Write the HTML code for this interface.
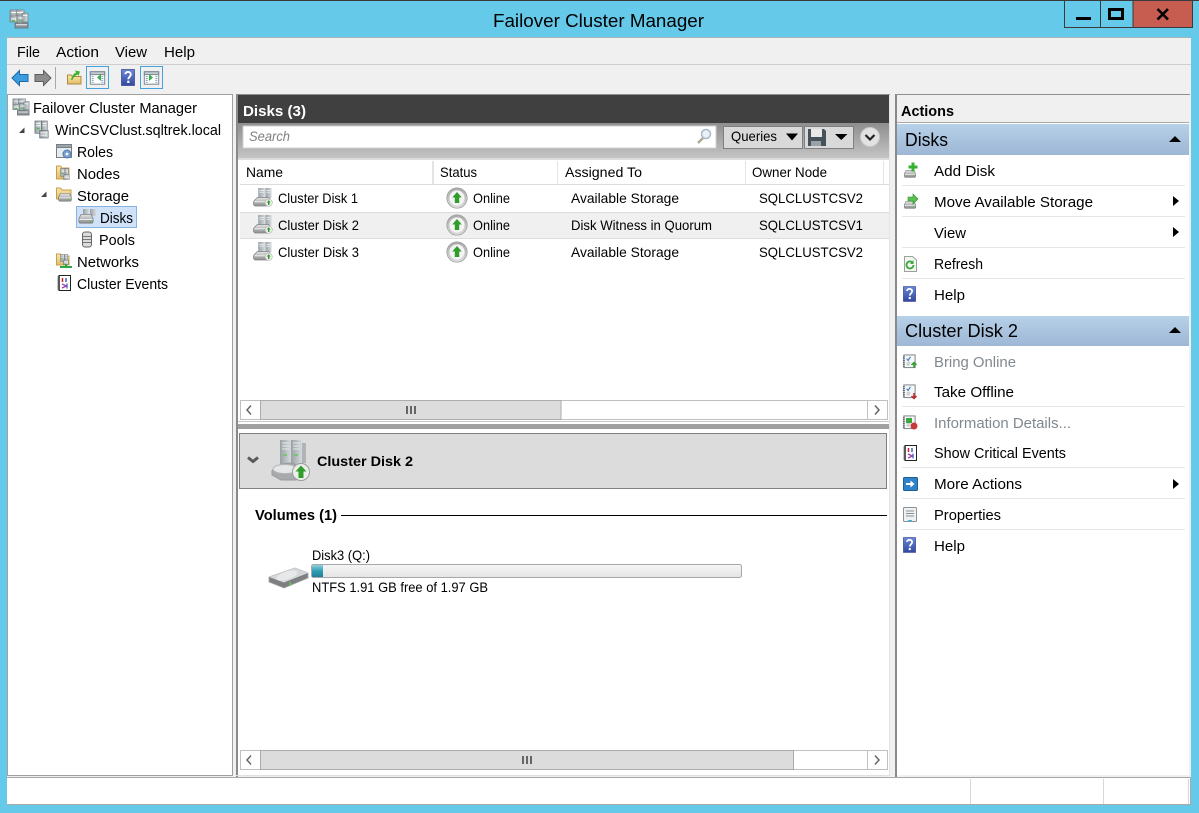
<!DOCTYPE html>
<html><head><meta charset="utf-8"><title>Failover Cluster Manager</title>
<style>
html,body{margin:0;padding:0;background:#65c9ea;overflow:hidden}
svg{display:block;position:absolute;left:0;top:0}
text{font-family:"Liberation Sans",sans-serif;fill:#000;font-size:15px;white-space:pre}
.r{font-size:14px}
.g{fill:#808890}
.b{font-weight:bold}
</style></head><body>
<svg width="1199" height="813" viewBox="0 0 1199 813" xmlns="http://www.w3.org/2000/svg">
<defs>
<linearGradient id="blue" x1="0" y1="0" x2="0" y2="1"><stop offset="0" stop-color="#b7d1e9"/><stop offset="1" stop-color="#9db7d5"/></linearGradient>
<linearGradient id="gb" x1="0" y1="0" x2="0" y2="1"><stop offset="0" stop-color="#8e8e8e"/><stop offset="1" stop-color="#c4c4c4"/></linearGradient>
<linearGradient id="prog" x1="0" y1="0" x2="0" y2="1"><stop offset="0" stop-color="#f6f6f6"/><stop offset="1" stop-color="#e4e4e4"/></linearGradient>
<linearGradient id="teal" x1="0" y1="0" x2="0" y2="1"><stop offset="0" stop-color="#8fd0de"/><stop offset=".5" stop-color="#2f9db5"/><stop offset="1" stop-color="#1f7f98"/></linearGradient>
<linearGradient id="ring" x1="0" y1="0" x2="0" y2="1"><stop offset="0" stop-color="#a8a8a8"/><stop offset="1" stop-color="#dcdcdc"/></linearGradient>
<linearGradient id="tower" x1="0" y1="0" x2="1" y2="0"><stop offset="0" stop-color="#97a1a6"/><stop offset="1" stop-color="#d6dadc"/></linearGradient>
<linearGradient id="hd" x1="0" y1="0" x2="0" y2="1"><stop offset="0" stop-color="#e6e6e6"/><stop offset="1" stop-color="#8a8a8a"/></linearGradient>
<linearGradient id="folder" x1="0" y1="0" x2="0" y2="1"><stop offset="0" stop-color="#fbe7a8"/><stop offset="1" stop-color="#e2bd6a"/></linearGradient>
<linearGradient id="help" x1="0" y1="0" x2="0" y2="1"><stop offset="0" stop-color="#6a88d8"/><stop offset="1" stop-color="#3348a0"/></linearGradient>

<symbol id="disk" viewBox="0 0 20 20">
<rect x="5" y="0" width="7" height="11" fill="url(#tower)"/><rect x="12.500" y="0" width="6.500" height="11" fill="url(#tower)"/>
<path d="M6 2.500h5M6 4.500h5M13.500 2.500h4.500M13.500 4.500h4.500" stroke="#eef0f0" stroke-width=".8"/>
<path d="M1 13 4 10h12l2 3v4.500l-1 1.500H1.500L0 17.500v-3z" fill="url(#hd)" stroke="#7b8185" stroke-width=".7"/>
<rect x="1" y="14" width="15" height="1" fill="#f0f0f0"/>
<circle cx="16" cy="15.500" r="3.800" fill="#eef0ee" stroke="#a8aeaa" stroke-width=".6"/>
<path d="M16 12.800 13.900 15.300h1.300v2.600h1.600v-2.600h1.300z" fill="#2f9d2a"/>
</symbol>
<symbol id="online" viewBox="0 0 22 22">
<circle cx="11" cy="11" r="10.200" fill="url(#ring)" stroke="#9a9a9a" stroke-width=".7"/>
<circle cx="11" cy="11" r="7.600" fill="#f4f4f4"/>
<path d="M11 5 6.200 10.500H8.800V16H13.200V10.500H15.800z" fill="#2f9d2a"/>
</symbol>
<symbol id="cluster" viewBox="0 0 20 20">
<rect x="1" y="1" width="8" height="8" fill="url(#tower)" stroke="#767f84" stroke-width=".7"/>
<rect x="7" y="1" width="8" height="8" fill="url(#tower)" stroke="#767f84" stroke-width=".7"/>
<rect x="1" y="7" width="7" height="6" fill="url(#tower)" stroke="#767f84" stroke-width=".7"/>
<rect x="8" y="6" width="7" height="8" fill="url(#tower)" stroke="#767f84" stroke-width=".7"/>
<rect x="13" y="4" width="6" height="9" fill="url(#tower)" stroke="#767f84" stroke-width=".7"/>
<path d="M2 3.500h5M8 3.500h6M14 6.500h4M9 9h5M2 10h5" stroke="#f5f5f5"/>
<rect x="3" y="11" width="3" height="1.500" fill="#5fbf55"/>
<rect x="10" y="11" width="3" height="1.500" fill="#5fbf55"/>
<rect x="6" y="14" width="13" height="5" fill="#8c9499" stroke="#5f666a" stroke-width=".7"/>
<rect x="7" y="15" width="11" height="1.300" fill="#d6dadc"/>
</symbol>
<symbol id="tree2" viewBox="0 0 18 20">
<rect x="1" y="1" width="7" height="13" fill="url(#tower)" stroke="#5f686d" stroke-width=".7"/>
<rect x="8" y="1" width="6" height="13" fill="url(#tower)" stroke="#5f686d" stroke-width=".7"/>
<path d="M2 3.500h5M2 6h5M9 3.500h4M9 6h4" stroke="#f5f5f5"/>
<rect x="3" y="8" width="3" height="2" fill="#58b74e"/>
<rect x="6" y="11" width="9" height="8" fill="url(#tower)" stroke="#5f686d" stroke-width=".7"/>
<path d="M7 13.500h7M7 16h7" stroke="#f5f5f5"/>
</symbol>
<symbol id="qmark" viewBox="0 0 14 17">
<rect x=".5" y=".5" width="13" height="16" fill="url(#help)" stroke="#2f3f90" stroke-width=".7"/>
<path d="M4.300 5.200C4.500 2.200 9.800 2.200 9.800 5.500 9.800 7.800 7.300 7.800 7.300 10.300" fill="none" stroke="#fff" stroke-width="1.900"/>
<rect x="6.200" y="11.700" width="2.200" height="2.300" fill="#fff"/>
</symbol>
<symbol id="pane" viewBox="0 0 24 24">
<rect x="0.500" y="0.500" width="23" height="23" fill="#f0f0f0" stroke="#3f9fdc"/>
<rect x="4.500" y="6" width="15" height="13" fill="#fff" stroke="#7a848e"/>
<rect x="4.500" y="6" width="15" height="3" fill="#c4ccd2" stroke="#7a848e"/>
<path d="M6 11h2M6 13h2M6 15h2M6 17h2M16 11h2M16 13h2M16 15h2M16 17h2" stroke="#7f9cc0"/>
</symbol>
<symbol id="cal" viewBox="0 0 16 16">
<rect x="2" y="1" width="12" height="13.500" fill="#f5f7f8" stroke="#767f84"/>
<path d="M1 3h2M1 5h2M1 7h2M1 9h2M1 11h2M1 13h2" stroke="#555"/>
<path d="M5 5 6.500 7 9 3" fill="none" stroke="#3a78c8" stroke-width="1.200"/>
<path d="M5 9.500h4M5 11.500h3" stroke="#a0a8ad"/>
</symbol>
<symbol id="events" viewBox="0 0 14 16">
<rect x="2" y=".5" width="11.500" height="15" fill="#fff" stroke="#222"/>
<path d="M.5 2h2.500M.5 4h2.500M.5 6h2.500M.5 8h2.500M.5 10h2.500M.5 12h2.500M.5 14h2.500" stroke="#222"/>
<path d="M5.500 3v4" stroke="#d02020" stroke-width="1.500"/>
<path d="M9 3v4" stroke="#3a5fc8" stroke-width="1.500"/>
<path d="M5 9 9.500 11 5 13" fill="none" stroke="#a040b0" stroke-width="1.300"/>
<path d="M10 8.500v5" stroke="#3a5fc8" stroke-width="1.200"/>
</symbol>
<symbol id="hdsmall" viewBox="0 0 18 12">
<path d="M3 .5h12l2.500 5v4l-1 1.500H1.500L.5 9.500v-4z" fill="url(#hd)" stroke="#6f7579" stroke-width=".8"/>
<rect x="1" y="6" width="16" height="1" fill="#f5f5f5"/>
<rect x="13" y="8" width="3" height="1.500" fill="#68b85e"/>
</symbol>
</defs>

<!-- window frame -->
<rect width="1199" height="813" fill="#65c9ea"/>
<rect width="1199" height="1" fill="#3a3a3a"/>
<use href="#cluster" x="9" y="9" width="20" height="20"/>
<text x="493" y="27" style="font-size:18.500px" textLength="211" lengthAdjust="spacingAndGlyphs">Failover Cluster Manager</text>

<!-- caption buttons -->
<rect x="1064.500" y="0.500" width="36" height="27" fill="#65c9ea" stroke="#3a3a3a"/>
<rect x="1100.500" y="0.500" width="33" height="27" fill="#65c9ea" stroke="#3a3a3a"/>
<rect x="1133" y="0.500" width="59.500" height="27" fill="#c75c50" stroke="#3a3a3a"/>
<rect x="1076" y="17" width="15" height="3" fill="#000"/>
<rect x="1109.500" y="9.500" width="13" height="9" fill="none" stroke="#000" stroke-width="3"/>
<path d="M1157.500 9 1168 19.500M1168 9 1157.500 19.500" stroke="#000" stroke-width="2.600" fill="none"/>

<!-- client -->
<rect x="7" y="38" width="1184" height="767" fill="#f0f0f0"/>
<rect x="7" y="37" width="1184" height="1" fill="#a8b4bc"/>
<rect x="7" y="64" width="1184" height="1" fill="#cfcfcf"/>

<text x="17" y="57" textLength="23" lengthAdjust="spacingAndGlyphs">File</text>
<text x="56" y="57" textLength="43" lengthAdjust="spacingAndGlyphs">Action</text>
<text x="115" y="57" textLength="32" lengthAdjust="spacingAndGlyphs">View</text>
<text x="164" y="57" textLength="31" lengthAdjust="spacingAndGlyphs">Help</text>

<!-- toolbar -->
<path d="M12 78 19.500 70.500V74.500H28V81.500H19.500V85.500z" fill="#3d9ce0" stroke="#1f6aa8"/>
<path d="M51 78 43.500 70.500V74.500H35V81.500H43.500V85.500z" fill="#8c8c8c" stroke="#5f5f5f"/>
<rect x="55" y="67" width="1" height="22" fill="#a8a8a8"/>
<path d="M67.500 84V75H71L72.500 76.500H81V84z" fill="url(#folder)" stroke="#b08a3c"/>
<path d="M71 80C72 76 73.500 73.500 76 72.500L75 70.500 80 71.500 78.500 76 77.500 74.500C75.500 75.500 73.500 77 72.500 80z" fill="#3fb52e"/>
<use href="#pane" x="86" y="66" width="23" height="23"/>
<path d="M101 74v7L97 77.500z" fill="#36b044"/>
<use href="#qmark" x="121" y="69" width="14" height="17"/>
<use href="#pane" x="140" y="66" width="23" height="23"/>
<path d="M149 74v7L153 77.500z" fill="#36b044"/>

<!-- tree pane -->
<rect x="7.500" y="94.500" width="225" height="681" fill="#fff" stroke="#a0a0a0"/>
<use href="#cluster" x="12" y="98" width="18" height="18"/>
<text x="33" y="113" textLength="164" lengthAdjust="spacingAndGlyphs">Failover Cluster Manager</text>
<path d="M24.500 127.500v5.500h-5.500z" fill="#444"/>
<use href="#tree2" x="34" y="120" width="17" height="19"/>
<text x="55" y="135" textLength="166" lengthAdjust="spacingAndGlyphs">WinCSVClust.sqltrek.local</text>

<rect x="56.500" y="144.500" width="15" height="13" fill="#e8ecef" stroke="#767f84"/>
<rect x="56.500" y="144.500" width="15" height="3" fill="#9ba5ac" stroke="#767f84"/>
<circle cx="67" cy="154" r="4" fill="#7aa3d2" stroke="#4e79ab"/>
<circle cx="67" cy="154" r="1.300" fill="#fff"/>
<text x="77" y="157" textLength="36" lengthAdjust="spacingAndGlyphs">Roles</text>

<path d="M56.500 179V166H60.500L62 168H69V179z" fill="url(#folder)" stroke="#c4a04e"/>
<use href="#tree2" x="60" y="166" width="11" height="16"/>
<text x="77" y="179" textLength="43" lengthAdjust="spacingAndGlyphs">Nodes</text>

<path d="M46.500 191.500v5.500h-5.500z" fill="#444"/>
<path d="M56.500 199V188H60.500L62 190H71V199z" fill="url(#folder)" stroke="#c4a04e"/>
<use href="#hdsmall" x="58" y="193" width="14" height="9"/>
<text x="77" y="201" textLength="52" lengthAdjust="spacingAndGlyphs">Storage</text>

<rect x="76.500" y="206.500" width="60" height="21" fill="#d0e2f7" stroke="#88b1e4"/>
<rect x="83" y="209" width="6" height="7" fill="url(#tower)"/><rect x="90" y="209" width="6" height="7" fill="url(#tower)"/>
<use href="#hdsmall" x="78" y="214" width="16" height="10"/>
<text x="100" y="223" textLength="33" lengthAdjust="spacingAndGlyphs">Disks</text>

<rect x="82.500" y="232" width="9" height="15" rx="2.500" fill="#dcdcdc" stroke="#666"/>
<path d="M83 236.500h8M83 239.500h8M83 242.500h8" stroke="#777"/>
<text x="99" y="245" textLength="36" lengthAdjust="spacingAndGlyphs">Pools</text>

<path d="M56.500 265V254H60.500L62 256H69V265z" fill="url(#folder)" stroke="#c4a04e"/>
<use href="#tree2" x="60" y="253" width="10" height="13"/>
<path d="M60 267h12M66 264v4" stroke="#2da64a" stroke-width="2"/>
<text x="77" y="267" textLength="62" lengthAdjust="spacingAndGlyphs">Networks</text>

<use href="#events" x="57" y="275" width="14" height="16"/>
<text x="77" y="289" textLength="91" lengthAdjust="spacingAndGlyphs">Cluster Events</text>

<!-- center pane -->
<rect x="236" y="94" width="653" height="682" fill="#fff"/>
<rect x="236" y="94" width="2" height="683" fill="#8a8a8a"/>
<rect x="889" y="94" width="1" height="682" fill="#e4e4e4"/>
<rect x="238" y="95" width="651" height="28" fill="#404040"/>
<rect x="236" y="94" width="654" height="1" fill="#909090"/>
<text x="243" y="116" class="b" style="fill:#fff;font-size:15px" textLength="63" lengthAdjust="spacingAndGlyphs">Disks (3)</text>
<rect x="238" y="123" width="651" height="35" fill="url(#gb)"/>
<rect x="243" y="126" width="473" height="22" fill="#fff" stroke="#d0d0d0"/>
<text x="249" y="141" class="r" style="fill:#808080;font-style:italic" textLength="41" lengthAdjust="spacingAndGlyphs">Search</text>
<circle cx="706" cy="134" r="4.500" fill="#e8f0f8" stroke="#a9b8c8" stroke-width="1.500"/>
<path d="M703 138 698 143" stroke="#b0a898" stroke-width="2.500"/>

<rect x="723.500" y="126.500" width="79" height="22" fill="#d9d9d9" stroke="#7f7f7f"/>
<text x="731" y="141" class="r" textLength="46" lengthAdjust="spacingAndGlyphs">Queries</text>
<path d="M786 133.500h12l-6 7z" fill="#000"/>
<rect x="804.500" y="126.500" width="49" height="22" fill="#d9d9d9" stroke="#7f7f7f"/>
<path d="M808 129h16l2 2v15h-18z" fill="#46525a"/>
<rect x="811" y="129" width="11" height="8" fill="#e8e8e8"/>
<rect x="811" y="141" width="10" height="5" fill="#9aa2a8"/>
<path d="M835 134h12.500l-6.250 6z" fill="#000"/>
<circle cx="870" cy="137" r="9.500" fill="#e2e2e2" stroke="#c8c8c8"/>
<path d="M865.500 135 870 139.500 874.500 135" fill="none" stroke="#222" stroke-width="2.200"/>

<rect x="238" y="158" width="651" height="2" fill="#dcdcdc"/>
<rect x="240" y="160" width="649" height="24" fill="#fff"/>
<rect x="240" y="184" width="649" height="1" fill="#dcdcdc"/>
<path d="M432.500 161v23M433.500 161v23M557.500 161v23M745.500 161v23M883.500 161v23" stroke="#e4e4e4"/>
<text x="246" y="177" class="r" textLength="37" lengthAdjust="spacingAndGlyphs">Name</text>
<text x="440" y="177" class="r" textLength="37" lengthAdjust="spacingAndGlyphs">Status</text>
<text x="565" y="177" class="r" textLength="77" lengthAdjust="spacingAndGlyphs">Assigned To</text>
<text x="752" y="177" class="r" textLength="75" lengthAdjust="spacingAndGlyphs">Owner Node</text>

<rect x="240" y="212" width="649" height="26" fill="#f0f0f0"/>
<rect x="240" y="212" width="649" height="1" fill="#dcdcdc"/>
<rect x="240" y="238" width="649" height="1" fill="#dcdcdc"/>

<use href="#disk" x="253" y="188" width="20" height="19"/>
<use href="#online" x="446" y="187" width="22" height="22"/>
<text x="278" y="203" class="r" textLength="80" lengthAdjust="spacingAndGlyphs">Cluster Disk 1</text>
<text x="473" y="203" class="r" textLength="37" lengthAdjust="spacingAndGlyphs">Online</text>
<text x="571" y="203" class="r" textLength="108" lengthAdjust="spacingAndGlyphs">Available Storage</text>
<text x="759" y="203" class="r" textLength="104" lengthAdjust="spacingAndGlyphs">SQLCLUSTCSV2</text>

<use href="#disk" x="253" y="215" width="20" height="19"/>
<use href="#online" x="446" y="214" width="22" height="22"/>
<text x="278" y="230" class="r" textLength="81" lengthAdjust="spacingAndGlyphs">Cluster Disk 2</text>
<text x="473" y="230" class="r" textLength="37" lengthAdjust="spacingAndGlyphs">Online</text>
<text x="571" y="230" class="r" textLength="141" lengthAdjust="spacingAndGlyphs">Disk Witness in Quorum</text>
<text x="759" y="230" class="r" textLength="104" lengthAdjust="spacingAndGlyphs">SQLCLUSTCSV1</text>

<use href="#disk" x="253" y="242" width="20" height="19"/>
<use href="#online" x="446" y="241" width="22" height="22"/>
<text x="278" y="257" class="r" textLength="81" lengthAdjust="spacingAndGlyphs">Cluster Disk 3</text>
<text x="473" y="257" class="r" textLength="37" lengthAdjust="spacingAndGlyphs">Online</text>
<text x="571" y="257" class="r" textLength="108" lengthAdjust="spacingAndGlyphs">Available Storage</text>
<text x="759" y="257" class="r" textLength="104" lengthAdjust="spacingAndGlyphs">SQLCLUSTCSV2</text>

<!-- scrollbar top -->
<rect x="240.500" y="400.500" width="647" height="19" fill="#fff" stroke="#c0c0c0"/>
<rect x="260.500" y="400.500" width="300.500" height="19" fill="#dcdcdc" stroke="#ababab"/>
<path d="M407 406v8M411 406v8M415 406v8" stroke="#666" stroke-width="2"/>
<path d="M251 405.500 247 410 251 414.500" fill="none" stroke="#666" stroke-width="1.500"/>
<rect x="867.500" y="400.500" width="20" height="19" fill="#fff" stroke="#c0c0c0"/>
<path d="M875 405.500 879 410 875 414.500" fill="none" stroke="#666" stroke-width="1.500"/>
<rect x="238" y="421" width="651" height="1" fill="#c8c8c8"/>

<rect x="238" y="424" width="651" height="5" fill="#a0a0a0"/>
<rect x="239" y="433.500" width="648" height="55" fill="#dcdcdc"/>
<rect x="239.500" y="433.500" width="647" height="55" fill="none" stroke="#808080"/>
<path d="M248 457.500 253 461.500 258 457.500" fill="none" stroke="#5a5a5a" stroke-width="3"/>

<rect x="280" y="440" width="11" height="24" fill="url(#tower)"/>
<rect x="291" y="440" width="11" height="24" fill="url(#tower)"/>
<rect x="302" y="443" width="4" height="20" fill="#aeb4b7"/>
<path d="M282 443h7M282 446h7M282 449h7M293 443h7M293 446h7M293 449h7" stroke="#e6e9e9"/>
<rect x="283" y="454" width="4" height="2" fill="#78c870"/>
<rect x="294" y="454" width="4" height="2" fill="#78c870"/>
<path d="M272 471C274 466 284 463 292 463L303 468V476L296 480H281L272 475z" fill="#a8abad" stroke="#9a9a9a"/>
<ellipse cx="285" cy="469" rx="12" ry="4.500" fill="#e4e6e8" stroke="#b4b4b4"/>
<circle cx="301" cy="472" r="8.500" fill="#eceeec" stroke="#9a9e9a"/>
<path d="M301 465.500 295.500 471.500H298.500V478H303.500V471.500H306.500z" fill="#2f9d2a"/>
<text x="317" y="466" class="r b" textLength="96" lengthAdjust="spacingAndGlyphs">Cluster Disk 2</text>

<text x="255" y="520" class="b" style="font-size:14.500px" textLength="82" lengthAdjust="spacingAndGlyphs">Volumes (1)</text>
<rect x="341" y="515" width="546" height="1" fill="#000"/>

<text x="312" y="560" class="r" textLength="58" lengthAdjust="spacingAndGlyphs">Disk3 (Q:)</text>
<rect x="311.500" y="564.500" width="430" height="13" rx="2" fill="url(#prog)" stroke="#a8a8a8"/>
<rect x="312" y="565" width="11" height="12" fill="url(#teal)"/>
<text x="312" y="592" class="r" textLength="176" lengthAdjust="spacingAndGlyphs">NTFS 1.91 GB free of 1.97 GB</text>
<path d="M269 577 295 568 308 573V578L284 588 269 582z" fill="#7d7f80" stroke="#a0a0a0" stroke-width=".8"/>
<path d="M269 577 295 568 308 573 284 582.500z" fill="#d4d6d8"/>
<ellipse cx="287" cy="575.500" rx="11" ry="4" fill="#e6e8ea" transform="rotate(-18 287 575.500)"/>
<rect x="289.500" y="582" width="1.500" height="4" fill="#68c85e"/>

<!-- scrollbar bottom -->
<rect x="240.500" y="750.500" width="647" height="19" fill="#fff" stroke="#c0c0c0"/>
<rect x="260.500" y="750.500" width="533" height="19" fill="#dcdcdc" stroke="#ababab"/>
<path d="M523 756v8M527 756v8M531 756v8" stroke="#666" stroke-width="2"/>
<path d="M251 755.500 247 760 251 764.500" fill="none" stroke="#666" stroke-width="1.500"/>
<rect x="867.500" y="750.500" width="20" height="19" fill="#fff" stroke="#c0c0c0"/>
<path d="M875 755.500 879 760 875 764.500" fill="none" stroke="#666" stroke-width="1.500"/>
<rect x="236" y="775" width="654" height="1" fill="#e0e0e0"/>

<!-- actions pane -->
<rect x="895" y="96" width="294" height="679" fill="#fff"/>
<rect x="895" y="94" width="2" height="683" fill="#8a8a8a"/>
<rect x="896" y="94" width="294" height="1" fill="#909090"/>
<rect x="897" y="96" width="292" height="26" fill="#f0f0f0"/>
<rect x="897" y="122" width="292" height="1" fill="#a8a8a8"/>
<text x="901" y="116" class="b" style="font-size:14.500px" textLength="53" lengthAdjust="spacingAndGlyphs">Actions</text>
<rect x="897" y="124" width="292" height="31" fill="url(#blue)"/>
<text x="905" y="146" style="font-size:18.500px" textLength="43" lengthAdjust="spacingAndGlyphs">Disks</text>
<path d="M1169 142 1175 136 1181 142z" fill="#000"/>

<path d="M902 185.500h283M902 216.500h283M902 247.500h283M902 278.500h283" stroke="#e6e6e6"/>
<use href="#hdsmall" x="902" y="170" width="16" height="8"/>
<path d="M913 162.500v9M908.500 167h9" stroke="#38b030" stroke-width="3"/>
<text x="934" y="176" textLength="61" lengthAdjust="spacingAndGlyphs">Add Disk</text>
<use href="#hdsmall" x="902" y="201" width="16" height="8"/>
<path d="M908 197h5v-3l5 5-5 5v-3h-5z" fill="#5ac050" stroke="#2f9030" stroke-width=".6"/>
<text x="934" y="207" textLength="159" lengthAdjust="spacingAndGlyphs">Move Available Storage</text>
<path d="M1173 196 1179 201 1173 206z" fill="#000"/>
<text x="934" y="238" textLength="32" lengthAdjust="spacingAndGlyphs">View</text>
<path d="M1173 227 1179 232 1173 237z" fill="#000"/>
<path d="M904.500 256.500h8l4 3.500v11.500h-12z" fill="#f4f6f4" stroke="#9aa29a"/>
<path d="M913.500 265a3.500 3.500 0 1 1-1.200-2.700" fill="none" stroke="#3ca83a" stroke-width="1.800"/>
<path d="M913.500 260v4h-3.500z" fill="#3ca83a"/>
<text x="934" y="269" textLength="49" lengthAdjust="spacingAndGlyphs">Refresh</text>
<use href="#qmark" x="903" y="286" width="13" height="16"/>
<text x="934" y="300" textLength="31" lengthAdjust="spacingAndGlyphs">Help</text>

<rect x="897" y="316" width="292" height="30" fill="url(#blue)"/>
<text x="905" y="337" style="font-size:18.500px" textLength="113" lengthAdjust="spacingAndGlyphs">Cluster Disk 2</text>
<path d="M1169 333 1175 327 1181 333z" fill="#000"/>

<path d="M902 406.500h283M902 467.500h283M902 498.500h283M902 529.500h283" stroke="#e6e6e6"/>
<use href="#cal" x="902" y="354" width="15" height="15"/>
<path d="M914 363v5M911.500 365 914 362.500 916.500 365" stroke="#2f9d2a" stroke-width="1.500" fill="none"/>
<text x="934" y="367" class="g" textLength="82" lengthAdjust="spacingAndGlyphs">Bring Online</text>
<use href="#cal" x="902" y="384" width="15" height="15"/>
<path d="M914 393v5M911.500 396 914 398.500 916.500 396" stroke="#c02020" stroke-width="1.500" fill="none"/>
<text x="934" y="397" textLength="80" lengthAdjust="spacingAndGlyphs">Take Offline</text>
<use href="#cal" x="902" y="415" width="15" height="15"/>
<rect x="906" y="418" width="6" height="5" fill="#3aa83a"/>
<circle cx="914" cy="426" r="3.500" fill="#c83a3a"/>
<text x="934" y="428" class="g" textLength="137" lengthAdjust="spacingAndGlyphs">Information Details...</text>
<use href="#events" x="903" y="445" width="14" height="16"/>
<text x="934" y="458" textLength="132" lengthAdjust="spacingAndGlyphs">Show Critical Events</text>
<rect x="903.500" y="477.500" width="14" height="13" rx="1" fill="#2f82c8" stroke="#1a5f98"/>
<path d="M906 483h4.500v-2.500L914.500 484 910.500 487.500V485H906z" fill="#fff"/>
<text x="934" y="489" textLength="88" lengthAdjust="spacingAndGlyphs">More Actions</text>
<path d="M1173 479 1179 484 1173 489z" fill="#000"/>
<rect x="903.500" y="507.500" width="13" height="14" rx="1" fill="#eef0f2" stroke="#8a9298"/>
<path d="M906 511h8M906 513.500h8M906 516h8" stroke="#8a9298"/>
<rect x="908" y="520" width="4" height="1.500" fill="#4ab0d8"/>
<text x="934" y="520" textLength="67" lengthAdjust="spacingAndGlyphs">Properties</text>
<use href="#qmark" x="903" y="537" width="13" height="16"/>
<text x="934" y="551" textLength="31" lengthAdjust="spacingAndGlyphs">Help</text>

<!-- status bar -->
<rect x="7" y="777" width="1184" height="28" fill="#fff"/>
<rect x="7" y="777" width="1184" height="1" fill="#a8a8a8"/>
<rect x="7" y="804" width="1184" height="1" fill="#a8a8a8"/>
<rect x="1190" y="777" width="1" height="28" fill="#a8a8a8"/>
<path d="M970.500 779v25M1103.500 779v25M1188.500 779v25" stroke="#d8d8d8"/>
</svg>
</body></html>
